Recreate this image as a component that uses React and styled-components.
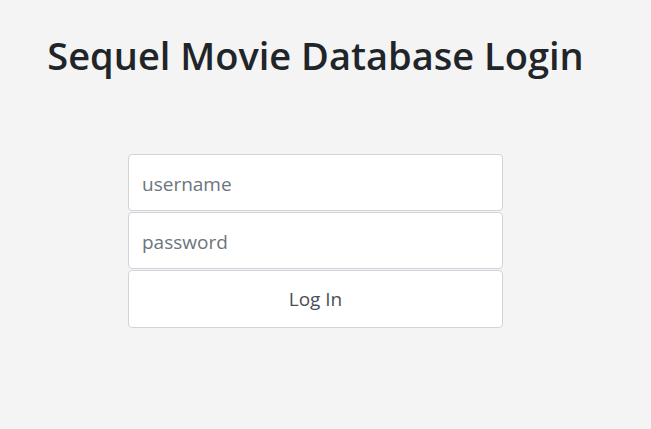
import React from "react";
import styled, { createGlobalStyle } from "styled-components";

const Global = createGlobalStyle`
  html, body { margin: 0; padding: 0; background: #f4f4f4; }
  body { font-family: "Open Sans", "Noto Sans", sans-serif; color: #212529; }
  * { box-sizing: border-box; }
`;

const Page = styled.div`
  width: 631px;
  padding-top: 31px;
  display: flex;
  flex-direction: column;
  align-items: center;
`;

const Title = styled.h1`
  margin: 0;
  font-size: 38px;
  line-height: 48px;
  font-weight: 600;
  color: #212529;
`;

const Form = styled.form`
  margin-top: 75px;
  width: 375px;
  display: flex;
  flex-direction: column;
`;

const Field = styled.input`
  height: 57px;
  margin-bottom: 1px;
  width: 100%;
  padding: 2px 13px 0;
  font-family: inherit;
  font-size: 19px;
  color: #495057;
  background: #fff;
  border: 1px solid #ced4da;
  border-radius: 4px;
  outline: none;
  &::placeholder { color: #6c757d; opacity: 1; }
`;

const Button = styled.button`
  height: 58px;
  width: 100%;
  font-family: inherit;
  font-size: 19px;
  color: #495057;
  background: #fff;
  border: 1px solid #ced4da;
  border-radius: 4px;
  cursor: pointer;
`;

export default function App() {
  return (
    <>
      <Global />
      <Page>
        <Title>Sequel Movie Database Login</Title>
        <Form onSubmit={(e) => e.preventDefault()}>
          <Field type="text" placeholder="username" />
          <Field type="password" placeholder="password" />
          <Button type="submit">Log In</Button>
        </Form>
      </Page>
    </>
  );
}
